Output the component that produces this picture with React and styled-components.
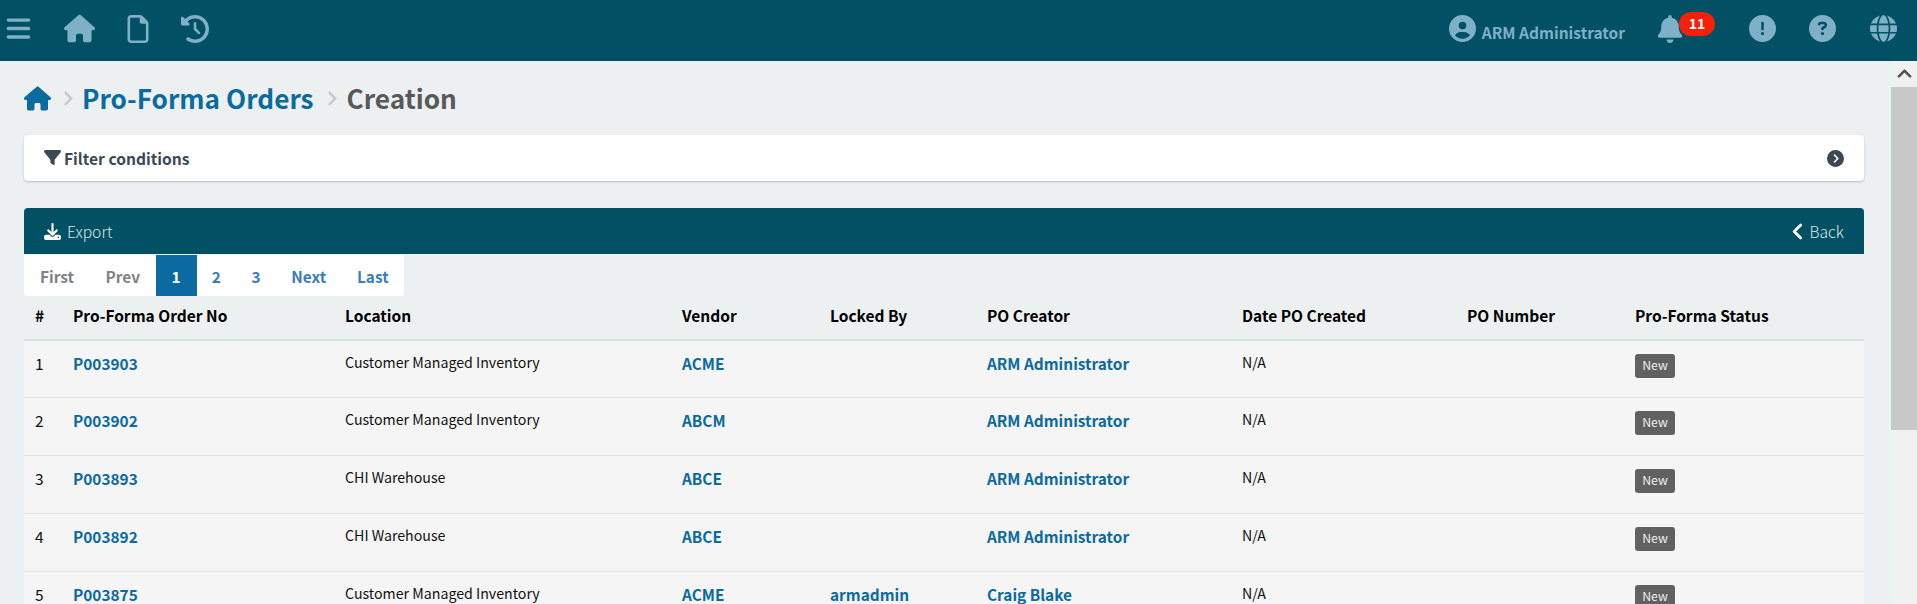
import React from 'react';
import styled, { createGlobalStyle } from 'styled-components';
import { FaBars, FaHouse, FaRegFile, FaClockRotateLeft, FaCircleUser, FaBell, FaCircleExclamation, FaCircleQuestion, FaGlobe, FaFilter, FaCircleChevronRight, FaDownload, FaChevronLeft, FaChevronRight, FaChevronUp } from 'react-icons/fa6';

const FONT = `"Noto Sans CJK SC", "Source Sans Pro", "Open Sans", sans-serif`;

const Global = createGlobalStyle`
  html, body { margin: 0; padding: 0; height: 100%; overflow: hidden; }
  body { font-family: ${FONT}; background: #ecf0f1; color: #111; }
  #root { height: 100%; }
  * { box-sizing: border-box; }
`;

const Page = styled.div`display: flex; flex-direction: column; height: 604px; width: 1917px;`;

const TopBar = styled.header`
  height: 61px; flex: none; background: #025064; color: #7eb0c7;
  display: flex; align-items: center; justify-content: space-between; padding: 0 20px 4px 5px;
`;
const NavGroup = styled.div`display: flex; align-items: center;`;
const NavIcon = styled.span`display: inline-flex; font-size: ${p => p.$size}px; margin-left: ${p => p.$ml || 0}px;`;
const UserName = styled.span`font-size: 15.5px; font-weight: 700; line-height: 20px; margin-left: 6px; margin-top: 7px;`;
const BellWrap = styled.span`position: relative; display: inline-flex; font-size: 28px; margin-left: 31px; margin-right: 65px;`;
const Badge = styled.span`
  position: absolute; left: 23px; top: -3px; width: 36px; height: 24px; border-radius: 12px;
  background: #f5200a; color: #fff; font-size: 14px; font-weight: 700; line-height: 23px; text-align: center;
`;

const Body = styled.div`flex: 1; min-height: 0; display: flex;`;
const Main = styled.main`flex: 1; min-width: 0; overflow: hidden; padding: 0 27px 0 24px;`;

const Crumbs = styled.nav`height: 74px; display: flex; align-items: center; font-size: 26.2px; font-weight: 700; line-height: 34px;`;
const CrumbHome = styled.span`display: inline-flex; color: #0b6a9f; font-size: 27px;`;
const CrumbSep = styled.span`
  display: inline-flex; color: #c6cacc; font-size: 15px; margin: 0 ${p => p.$mr}px 0 ${p => p.$ml}px;
  svg { stroke: currentColor; stroke-width: 30; }
`;
const CrumbLink = styled.span`color: #0b6a9f;`;
const CrumbCurrent = styled.span`color: #58595b;`;

const FilterCard = styled.section`
  height: 46px; background: #fff; border-radius: 4px; box-shadow: 0 1px 2px rgba(0,0,0,.22);
  display: flex; align-items: center; justify-content: space-between; padding: 0 20px;
  color: #3d4856; font-weight: 700; font-size: 15.6px;
`;
const FilterLabel = styled.span`display: flex; align-items: center; gap: 3px; line-height: 18px; padding-bottom: 1px;`;
const FilterIcon = styled.span`display: inline-flex; font-size: 17px; color: #3d4856;`;
const FilterToggle = styled.span`display: inline-flex; font-size: 17px; color: #3d4856;`;

const Panel = styled.section`margin-top: 27px;`;
const PanelBar = styled.div`
  height: 46px; background: #025064; border-radius: 4px 4px 0 0; color: #dbe7ea;
  display: flex; align-items: center; justify-content: space-between; padding: 0 20px; font-size: 15.6px; font-weight: 300;
`;
const BarAction = styled.span`display: flex; align-items: center; gap: ${p => p.$gap}px; line-height: 20px;`;
const BarIcon = styled.span`
  display: inline-flex; font-size: ${p => p.$size}px; color: #fff;
  svg { stroke: currentColor; stroke-width: ${p => p.$stroke || 0}; }
`;

const Pager = styled.div`
  display: flex; width: max-content; height: 41px; margin-top: 1px; background: #fff; border-radius: 0 0 4px 4px; overflow: hidden;
`;
const PageItem = styled.span`
  height: 100%; padding: 0 ${p => p.$pad}px; display: flex; align-items: center; justify-content: center;
  min-width: ${p => p.$min || 0}px; font-size: 15.4px; font-weight: 700; line-height: 20px;
  color: ${p => p.$active ? '#fff' : p.$off ? '#808285' : '#3a7cbd'};
  background: ${p => p.$active ? '#0b6a9f' : 'transparent'};
`;

const Table = styled.div`display: block;`;
const HeadRow = styled.div`
  display: grid; grid-template-columns: var(--cols); height: 45px; align-items: center;
  border-bottom: 2px solid #dcdfe1; font-size: 15.5px; font-weight: 700; color: #000; line-height: 20px; padding-bottom: 5px;
`;
const Row = styled.div`
  display: grid; grid-template-columns: var(--cols); height: 58px; background: #f5f5f5;
  border-bottom: 1px solid #dfe1e2; font-size: 14.2px; color: #111; line-height: 20px; padding-top: 11px;
  &:nth-child(2) { height: 57px; }
`;
const Cols = styled.div`--cols: 49px 272px 337px 148px 157px 255px 225px 168px 1fr;`;
const HeadCell = styled.div`padding-left: ${p => p.$first ? 11 : 0}px;`;
const Cell = styled.div`padding-left: ${p => p.$first ? 11 : 0}px;`;
const NumCell = styled(Cell)`font-size: 15.5px; margin-top: 1px;`;
const LinkCell = styled.div`color: #0b6a9f; font-weight: 700; font-size: 15.4px; margin-top: 1px;`;
const StatusTag = styled.span`
  display: block; margin-top: 2px; width: 40px; height: 24px; border-radius: 3px; background: #616161; color: #eee;
  font-size: 12.3px; line-height: 23px; text-align: center;
`;

const Scroll = styled.aside`width: 26px; flex: none; background: #f1f1f1; display: flex; flex-direction: column;`;
const ScrollUp = styled.div`
  height: 26px; display: flex; align-items: center; justify-content: center; color: #505050; font-size: 15px;
  svg { stroke: currentColor; stroke-width: 30; }
`;
const ScrollThumb = styled.div`height: 343px; background: #c8c8c8;`;

const heads = ['#', 'Pro-Forma Order No', 'Location', 'Vendor', 'Locked By', 'PO Creator', 'Date PO Created', 'PO Number', 'Pro-Forma Status'];
const rows = [
  [1, 'P003903', 'Customer Managed Inventory', 'ACME', '', 'ARM Administrator'],
  [2, 'P003902', 'Customer Managed Inventory', 'ABCM', '', 'ARM Administrator'],
  [3, 'P003893', 'CHI Warehouse', 'ABCE', '', 'ARM Administrator'],
  [4, 'P003892', 'CHI Warehouse', 'ABCE', '', 'ARM Administrator'],
  [5, 'P003875', 'Customer Managed Inventory', 'ACME', 'armadmin', 'Craig Blake'],
];

export default function App() {
  return (
    <Page>
      <Global />
      <TopBar>
        <NavGroup>
          <NavIcon $size={27}><FaBars /></NavIcon>
          <NavIcon $size={31} $ml={32}><FaHouse /></NavIcon>
          <NavIcon $size={28} $ml={29}><FaRegFile /></NavIcon>
          <NavIcon $size={28} $ml={29}><FaClockRotateLeft /></NavIcon>
        </NavGroup>
        <NavGroup>
          <NavIcon $size={27}><FaCircleUser /></NavIcon>
          <UserName>ARM Administrator</UserName>
          <BellWrap><FaBell /><Badge>11</Badge></BellWrap>
          <NavIcon $size={27}><FaCircleExclamation /></NavIcon>
          <NavIcon $size={27} $ml={33}><FaCircleQuestion /></NavIcon>
          <NavIcon $size={27} $ml={34}><FaGlobe /></NavIcon>
        </NavGroup>
      </TopBar>
      <Body>
        <Main>
          <Crumbs>
            <CrumbHome><FaHouse /></CrumbHome>
            <CrumbSep $ml={9} $mr={7}><FaChevronRight /></CrumbSep>
            <CrumbLink>Pro-Forma Orders</CrumbLink>
            <CrumbSep $ml={10} $mr={8}><FaChevronRight /></CrumbSep>
            <CrumbCurrent>Creation</CrumbCurrent>
          </Crumbs>
          <FilterCard>
            <FilterLabel><FilterIcon><FaFilter /></FilterIcon>Filter conditions</FilterLabel>
            <FilterToggle><FaCircleChevronRight /></FilterToggle>
          </FilterCard>
          <Panel>
            <PanelBar>
              <BarAction $gap={6}><BarIcon $size={17}><FaDownload /></BarIcon>Export</BarAction>
              <BarAction $gap={3}><BarIcon $size={17} $stroke={30}><FaChevronLeft /></BarIcon>Back</BarAction>
            </PanelBar>
            <Pager>
              <PageItem $off $pad={16}>First</PageItem>
              <PageItem $off $pad={15.5}>Prev</PageItem>
              <PageItem $active $min={41}>1</PageItem>
              <PageItem $pad={15.3}>2</PageItem>
              <PageItem $pad={15.3}>3</PageItem>
              <PageItem $pad={15.3}>Next</PageItem>
              <PageItem $pad={15.5}>Last</PageItem>
            </Pager>
            <Cols>
              <Table>
                <HeadRow>{heads.map((h, i) => <HeadCell key={h} $first={i === 0}>{h}</HeadCell>)}</HeadRow>
                {rows.map(r => (
                  <Row key={r[0]}>
                    <NumCell $first>{r[0]}</NumCell>
                    <LinkCell>{r[1]}</LinkCell>
                    <Cell>{r[2]}</Cell>
                    <LinkCell>{r[3]}</LinkCell>
                    <LinkCell>{r[4]}</LinkCell>
                    <LinkCell>{r[5]}</LinkCell>
                    <Cell>N/A</Cell>
                    <Cell />
                    <Cell><StatusTag>New</StatusTag></Cell>
                  </Row>
                ))}
              </Table>
            </Cols>
          </Panel>
        </Main>
        <Scroll>
          <ScrollUp><FaChevronUp /></ScrollUp>
          <ScrollThumb />
        </Scroll>
      </Body>
    </Page>
  );
}
